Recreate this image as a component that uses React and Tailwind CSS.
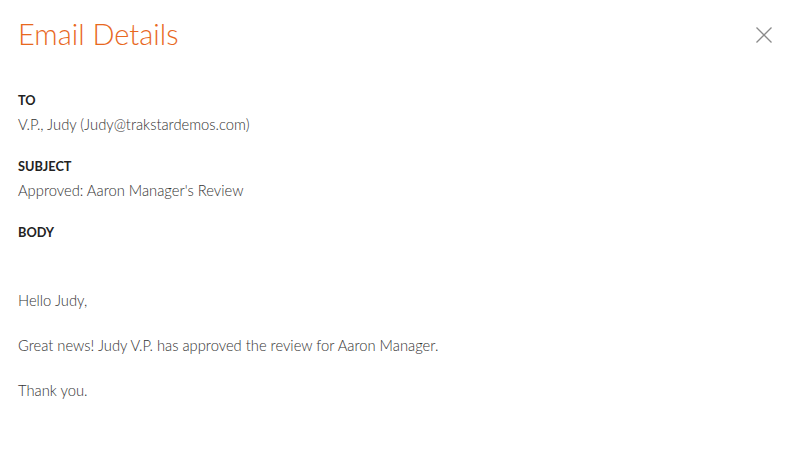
import React from "react";

const Field = ({ label, children }) => (
    <div className="mb-[18px]">
        <div className="text-[12.75px] font-bold uppercase leading-[20px] text-[#222]">{label}</div>
        <div className="text-[14.75px] font-light leading-[28px] text-[#333]">{children}</div>
    </div>
);

const App = () => {
    return (
        <div className="min-h-screen bg-white font-['Lato',sans-serif]">
            <div className="flex items-start justify-between pl-[18px] pr-[20px] pt-[14px]">
                <h1 className="text-[29px] font-light leading-[40px] text-[#e8681e]">Email Details</h1>
                <button className="mt-[12px] text-[#8a8a8a]">
                    <svg width="18" height="18" viewBox="0 0 18 18" fill="none" stroke="currentColor" strokeWidth="1.3">
                        <path d="M1.5 1.5L16.5 16.5M16.5 1.5L1.5 16.5" />
                    </svg>
                </button>
            </div>

            <div className="pl-[18px] pt-[36px]">
                <Field label="To">V.P., Judy (Judy@trakstardemos.com)</Field>
                <Field label="Subject">Approved: Aaron Manager's Review</Field>
                <div className="text-[12.75px] font-bold uppercase leading-[20px] text-[#222]">Body</div>

                <div className="pt-[46px] text-[14.75px] font-light leading-[24px] text-[#333]">
                    <p className="mb-[21px]">Hello Judy,</p>
                    <p className="mb-[21px]">Great news! Judy V.P. has approved the review for Aaron Manager.</p>
                    <p>Thank you.</p>
                </div>
            </div>
        </div>
    );
};

export default App;
